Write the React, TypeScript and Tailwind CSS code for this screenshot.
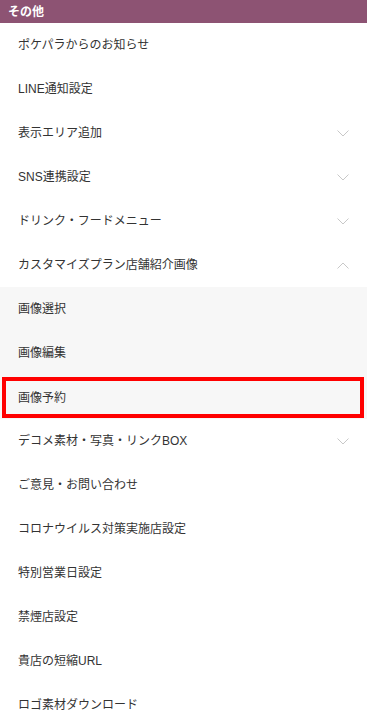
import React from "react";

type Item = { label: string; chevron?: "down" | "up"; sub?: boolean; active?: boolean };

const items: Item[] = [
  { label: "ポケパラからのお知らせ" },
  { label: "LINE通知設定" },
  { label: "表示エリア追加", chevron: "down" },
  { label: "SNS連携設定", chevron: "down" },
  { label: "ドリンク・フードメニュー", chevron: "down" },
  { label: "カスタマイズプラン店舗紹介画像", chevron: "up" },
  { label: "画像選択", sub: true },
  { label: "画像編集", sub: true },
  { label: "画像予約", sub: true, active: true },
  { label: "デコメ素材・写真・リンクBOX", chevron: "down" },
  { label: "ご意見・お問い合わせ" },
  { label: "コロナウイルス対策実施店設定" },
  { label: "特別営業日設定" },
  { label: "禁煙店設定" },
  { label: "貴店の短縮URL" },
  { label: "ロゴ素材ダウンロード" },
];

function Chevron({ dir }: { dir: "down" | "up" }) {
  return (
    <svg width="12" height="7" viewBox="0 0 12 7" className="shrink-0">
      <path
        d={dir === "down" ? "M0.5 0.5 L6 6 L11.5 0.5" : "M0.5 6.5 L6 1 L11.5 6.5"}
        fill="none"
        stroke="#c8c8c8"
        strokeWidth="1"
      />
    </svg>
  );
}

export default function App() {
  return (
    <div
      className="w-[367px] h-[724px] overflow-hidden bg-white text-[#333]"
      style={{ fontFamily: '"Liberation Sans", "Noto Sans CJK JP", sans-serif' }}
    >
      <div className="h-[23px] bg-[#8d5373] flex items-center pl-[8px] text-white font-bold text-[12px]">
        その他
      </div>
      <div className="flex flex-col">
        {items.map((it, i) =>
          it.active ? (
            <div key={i} className="bg-[#f7f7f7] h-[44px] pt-[2px] pb-[1px] pl-[2px] pr-[3px]">
              <div className="h-[41px] flex items-center border-[4px] border-[#ff0000] pl-[12px] text-[12px]">
                <span>{it.label}</span>
              </div>
            </div>
          ) : (
            <div
              key={i}
              className={
                "h-[44px] flex items-center justify-between text-[12px] pl-[18px] pr-[18px] " +
                (it.sub ? "bg-[#f7f7f7]" : "bg-white")
              }
            >
              <span>{it.label}</span>
              {it.chevron && <Chevron dir={it.chevron} />}
            </div>
          )
        )}
      </div>
    </div>
  );
}
